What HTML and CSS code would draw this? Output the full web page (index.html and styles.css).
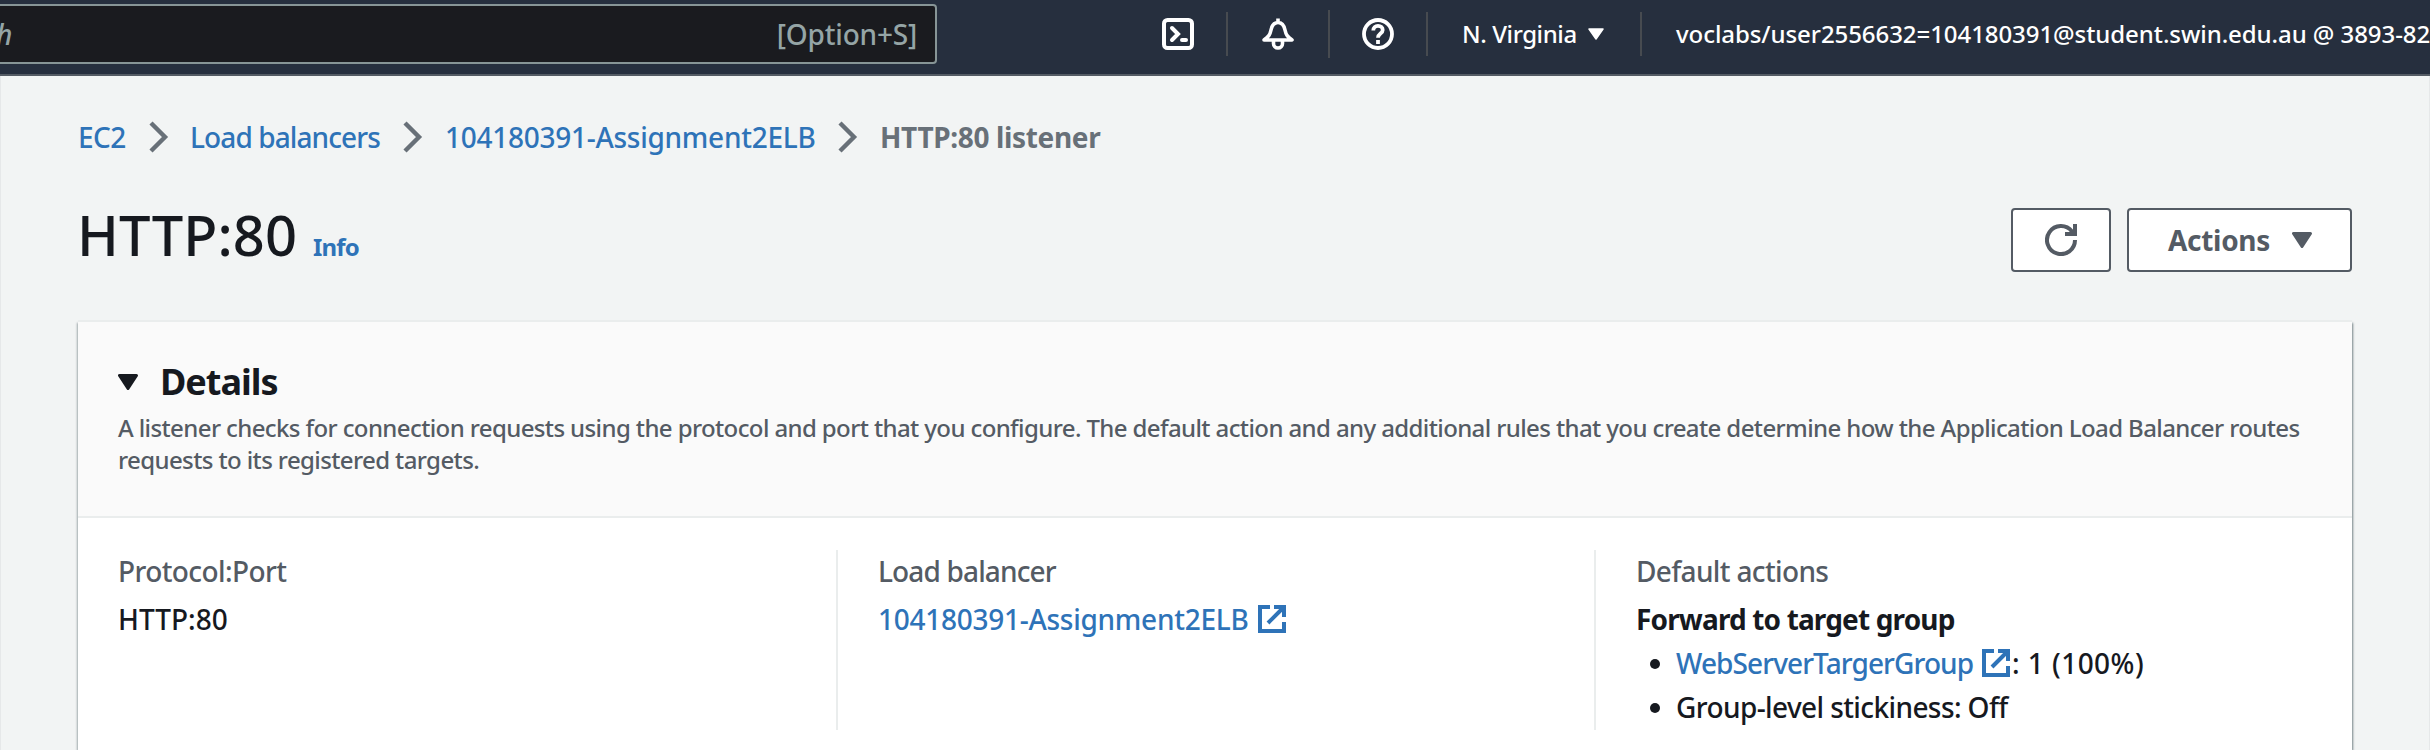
FILE: index.html
```html
<!DOCTYPE html>
<html lang="en">
<head>
<meta charset="utf-8">
<title>HTTP:80 listener</title>
<link rel="stylesheet" href="styles.css">
</head>
<body>
<header class="topbar">
  <div class="search"><em class="search-text">h</em><span class="search-key">[Option+S]</span></div>
  <svg class="nav-icon shell" viewBox="0 0 32 32"><rect x="2" y="2" width="28" height="28" rx="3.5"/><path d="M10 10l6 6-6 6M20 22h4" stroke-linecap="round"/></svg>
  <i class="divider"></i>
  <svg class="nav-icon bell" viewBox="0 0 32 32"><path d="M16 0.5v4M2 22c4.5-3.500 6-5 7-10 .8-4 3-7.500 7-7.500s6.200 3.500 7 7.500c1 5 2.500 6.500 7 10zM11.500 23v2.500a4.500 4.500 0 0 0 9 0V23" stroke-linejoin="round"/></svg>
  <i class="divider tall"></i>
  <svg class="nav-icon help" viewBox="0 0 32 32"><circle cx="16" cy="16" r="14"/><path d="M11.300 12.500c0-3 2-4.700 4.700-4.700s4.700 1.700 4.700 4.200c0 3.600-4.700 3.500-4.700 7.700"/><path d="M16 22v4"/></svg>
  <i class="divider"></i>
  <span class="region">N. Virginia</span>
  <svg class="region-caret" viewBox="0 0 16 12"><path d="M1 1h14L8 11z"/></svg>
  <i class="divider"></i>
  <span class="account">voclabs/user2556632=104180391@student.swin.edu.au @ 3893-82</span>
</header>
<main class="page">
  <nav class="crumbs">
    <a class="crumb ec2">EC2</a>
    <svg class="chevron" viewBox="0 0 20 32"><path d="M2 2l14 14L2 30"/></svg>
    <a class="crumb lbs">Load balancers</a>
    <svg class="chevron" viewBox="0 0 20 32"><path d="M2 2l14 14L2 30"/></svg>
    <a class="crumb elb">104180391-Assignment2ELB</a>
    <svg class="chevron" viewBox="0 0 20 32"><path d="M2 2l14 14L2 30"/></svg>
    <span class="crumb current">HTTP:80 listener</span>
  </nav>
  <div class="title-row">
    <h1 class="title">HTTP:80</h1>
    <a class="info">Info</a>
    <div class="buttons">
      <button class="btn refresh"><svg class="refresh-icon" viewBox="0 0 32 32"><path d="M30 16A14 14 0 1 1 27 7.400L30 10M30 0v10H20"/></svg></button>
      <button class="btn actions">Actions<svg class="actions-caret" viewBox="0 0 20 16"><path d="M1.500 1.500h17L10 14.500z"/></svg></button>
    </div>
  </div>
  <section class="card">
    <div class="card-head">
      <h2 class="card-title"><svg class="card-caret" viewBox="0 0 20 16"><path d="M1.500 1.500h17L10 14.500z"/></svg>Details</h2>
      <p class="desc">A listener checks for connection requests using the protocol and port that you configure. The default action and any additional rules that you create determine how the Application Load Balancer routes<br>requests to its registered targets.</p>
    </div>
    <div class="columns">
      <div class="col first">
        <div class="label protocol">Protocol:Port</div>
        <div class="value">HTTP:80</div>
      </div>
      <div class="col">
        <div class="label">Load balancer</div>
        <div class="value"><a class="elb">104180391-Assignment2ELB</a><svg class="ext" viewBox="0 0 28 28"><path d="M12 2H2v24h24v-9"/><path d="M16 2h10v10M26 2L10 18"/></svg></div>
      </div>
      <div class="col">
        <div class="label default">Default actions</div>
        <div class="value forward">Forward to target group</div>
        <ul class="list">
          <li><a class="group">WebServerTargerGroup</a><svg class="ext" viewBox="0 0 28 28"><path d="M12 2H2v24h24v-9"/><path d="M16 2h10v10M26 2L10 18"/></svg><span class="weight">: 1 (100%)</span></li>
          <li class="sticky">Group-level stickiness: Off</li>
        </ul>
      </div>
    </div>
  </section>
</main>
</body>
</html>
```
FILE: styles.css
```css
* { box-sizing: border-box; }
body {
  margin: 0;
  width: 2430px;
  height: 750px;
  overflow: hidden;
  background: #f2f4f4;
  color: #16191f;
  font: 500 28px/36px "Noto Sans", sans-serif;
}
svg { display: block; flex: none; fill: none; stroke: currentColor; }
a { color: #2e73b8; text-decoration: none; }
h1, h2, p, ul { margin: 0; padding: 0; }

.topbar {
  display: flex;
  align-items: center;
  height: 76px;
  padding-bottom: 6px;
  border-bottom: 2px solid #545b64;
  background: #262f3e;
  color: #fff;
  font-size: 24px;
  line-height: 68px;
  white-space: nowrap;
  overflow: hidden;
}
.search {
  display: flex;
  justify-content: space-between;
  align-items: center;
  flex: none;
  width: 937px;
  height: 60px;
  padding-right: 18px;
  border: 2px solid #879596;
  border-left: 0;
  border-radius: 0 4px 4px 0;
  background: #1a1b1f;
  color: #95a5a6;
  font-size: 28px;
  line-height: 56px;
}
.search-text { margin-left: -4px; }
.search-key { letter-spacing: -0.2px; }
.nav-icon { width: 32px; height: 32px; stroke-width: 4; }
.nav-icon.shell { margin-left: 225px; }
.nav-icon.bell { margin-left: 34px; stroke-width: 3.6; }
.nav-icon.help { margin-left: 32px; stroke-width: 3.8; }
.divider { flex: none; width: 2px; height: 44px; margin-left: 32px; background: #474b50; }
.divider.tall { height: 48px; margin-left: 34px; }
.region { margin-left: 34px; width: 114px; letter-spacing: -0.4px; }
.region-caret { width: 16px; height: 12px; margin-left: 12px; fill: #fff; stroke-width: 1.5; stroke-linejoin: round; }
.region-caret + .divider { margin-left: 36px; }
.account { margin-left: 34px; letter-spacing: -0.07px; }

.page {
  height: 674px;
  padding: 43px 77px 0;
  border: solid #e6e8e9;
  border-width: 0 1px;
}
.crumbs { display: flex; align-items: center; white-space: nowrap; }
.crumb { flex: none; }
.crumb.ec2 { width: 48px; letter-spacing: -0.6px; }
.chevron { width: 20px; height: 32px; margin: 0 21px 0 23px; color: #687078; stroke-width: 4.4; }
.crumb.lbs { width: 190px; letter-spacing: -0.9px; }
.crumb.elb { width: 370px; margin-left: 1px; }
.elb { letter-spacing: -0.27px; }
.crumb.current { margin-left: 1px; color: #687078; font-weight: 700; letter-spacing: -0.35px; }

.title-row { display: flex; height: 167px; padding-top: 45px; }
.title { width: 236px; margin-left: -1px; font-size: 56px; font-weight: 500; line-height: 68px; letter-spacing: 0.1px; }
.info { padding-top: 29px; font-size: 24px; font-weight: 700; line-height: 36px; letter-spacing: -0.8px; }
.buttons { display: flex; gap: 16px; margin: 8px 0 0 auto; }
.btn {
  display: flex;
  align-items: center;
  justify-content: center;
  height: 64px;
  padding: 0;
  border: 2px solid #545b64;
  border-radius: 4px;
  background: #fff;
  color: #545b64;
  font: 700 28px/60px "Noto Sans", sans-serif;
}
.refresh { width: 100px; }
.refresh-icon { width: 32px; height: 32px; stroke-width: 4; }
.actions { width: 225px; padding-left: 1px; letter-spacing: -0.3px; }
.actions-caret { width: 20px; height: 16px; margin-left: 22px; fill: currentColor; stroke-width: 3; stroke-linejoin: round; }

.card {
  height: 428px;
  background: #fff;
  box-shadow: 0 -2px 0 #eaeded, 1px 1px 2px rgba(0, 28, 36, 0.5), -1px 1px 2px rgba(0, 28, 36, 0.3);
}
.card-head { height: 196px; padding: 38px 40px 0; border-bottom: 2px solid #eaeded; background: #fafafa; }
.card-title { display: flex; align-items: center; gap: 22px; font-size: 36px; font-weight: 700; line-height: 44px; letter-spacing: -1px; }
.card-caret { width: 20px; height: 16px; fill: currentColor; stroke-width: 3; stroke-linejoin: round; }
.desc { margin-top: 8px; color: #545b64; font-size: 24px; line-height: 32px; letter-spacing: -0.61px; white-space: nowrap; }
.columns { display: grid; grid-template-columns: 758px 758px 758px; padding-top: 32px; white-space: nowrap; }
.col { height: 180px; padding: 3px 0 0 40px; border-left: 2px solid #eaeded; }
.col.first { padding-left: 40px; border-left: 0; }
.label { color: #545b64; letter-spacing: -0.85px; }
.label.protocol { letter-spacing: -0.6px; }
.label.default { letter-spacing: -0.65px; }
.value { display: flex; align-items: center; margin-top: 12px; }
.ext { width: 28px; height: 28px; color: #2e73b8; stroke-width: 4; }
.value .ext { margin-left: 10px; }
.forward { font-weight: 700; letter-spacing: -0.85px; }
.list { margin-top: 4px; line-height: 44px; list-style: none; }
.list li { display: flex; align-items: center; letter-spacing: -0.6px; }
.list li::before { content: ""; width: 10px; height: 10px; margin: 2px 16px 0 14px; border-radius: 50%; background: currentColor; }
.list .group { width: 306px; letter-spacing: -0.9px; }
.list .weight { margin-left: 2px; letter-spacing: 0.45px; }
```
